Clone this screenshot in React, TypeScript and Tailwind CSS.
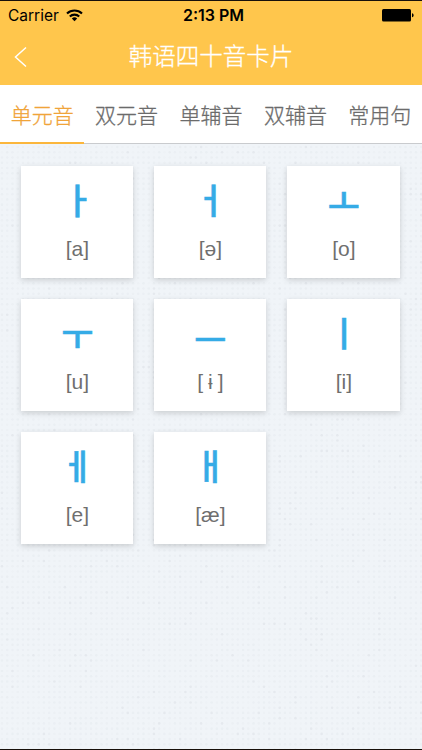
import { useState } from 'react'

interface Card {
  letter: string
  sound: string
  nudge?: string
}

const TABS = ['单元音', '双元音', '单辅音', '双辅音', '常用句']

// nudge: 字形在方格内的视觉位置微调
const CARDS: Card[] = [
  { letter: 'ㅏ', sound: 'a', nudge: 'pl-[2px]' },
  { letter: 'ㅓ', sound: 'ə' },
  { letter: 'ㅗ', sound: 'o', nudge: 'pt-[1px]' },
  { letter: 'ㅜ', sound: 'u', nudge: 'pt-[3px]' },
  { letter: 'ㅡ', sound: 'ɨ', nudge: 'pt-[6px]' },
  { letter: 'ㅣ', sound: 'i' },
  { letter: 'ㅔ', sound: 'e' },
  { letter: 'ㅐ', sound: 'æ' },
]

const STEP = 5.24

export default function App() {
  const [tab, setTab] = useState(0)

  return (
    <div className="flex h-[750px] w-[422px] flex-col overflow-hidden border-y border-[#17100a] bg-[#f0f4f8] font-['Liberation_Sans','Noto_Sans_CJK_SC',sans-serif]">
      <header className="h-[84px] shrink-0 bg-[#ffc64c]">
        <StatusBar />
        <div className="grid h-[54px] grid-cols-[48px_1fr_48px] items-center">
          <button className="pl-[14px] pt-px" aria-label="返回">
            <svg width="14" height="22" viewBox="0 0 14 22" fill="none" stroke="#fff" strokeWidth="1.5">
              <path d="M12 1.5 1.5 11 12 20.5" />
            </svg>
          </button>
          <h1 className="whitespace-nowrap text-center font-['Noto_Sans_CJK_SC',sans-serif] text-[23.5px] font-light leading-none text-white [-webkit-text-stroke:0.3px_#fff]">
            韩语四十音卡片
          </h1>
        </div>
      </header>

      <nav className="grid h-[59px] shrink-0 grid-cols-5 border-b border-[#c9cbce] bg-white">
        {TABS.map((name, i) => (
          <button
            key={name}
            onClick={() => setTab(i)}
            className={`-mb-px whitespace-nowrap border-b-2 pt-px font-['Noto_Sans_CJK_SC',sans-serif] text-[21px] font-light leading-none [-webkit-text-stroke:0.3px_currentColor] ${
              tab === i ? 'border-[#fbb63c] text-[#f0a43a]' : 'border-transparent text-[#6b6b6b]'
            }`}
          >
            {name}
          </button>
        ))}
      </nav>

      <main className="relative flex-1">
        <Dots />
        <div className="relative grid grid-cols-[112px_112px_113px] gap-[21px] pl-[21.4px] pt-[21.5px]">
          {CARDS.map(card => (
            <div key={card.letter} className="flex h-[112px] flex-col items-center bg-white shadow-[0_2px_6px_rgba(0,0,0,0.16)]">
              <span
                className={`mt-[15px] h-[36px] font-['Noto_Sans_CJK_KR',sans-serif] text-[35px] font-medium leading-[36px] text-[#35abe6] [-webkit-text-stroke:0.5px_#35abe6] ${card.nudge ?? ''}`}
              >
                {card.letter}
              </span>
              <span className="mt-[20px] whitespace-nowrap text-[21px] leading-[24px] text-[#6f6f6f]">
                [<span className={card.sound === 'ɨ' ? 'px-[5px]' : ''}>{card.sound}</span>]
              </span>
            </div>
          ))}
        </div>
      </main>
    </div>
  )
}

function StatusBar() {
  return (
    <div className="grid h-[28px] grid-cols-3 items-center px-[8px] font-['Inter',sans-serif] text-[16px] leading-none text-black">
      <div className="flex items-center gap-[7px]">
        <span className="pt-px text-[15.5px]">Carrier</span>
        <svg width="17" height="13" viewBox="0 0 17 13" fill="none" stroke="#000" strokeWidth="2.1">
          <path d="M1 4.6a10.8 10.8 0 0 1 15 0" />
          <path d="M3.8 7.5a6.8 6.8 0 0 1 9.4 0" />
          <path d="M8.5 12.3 5.8 9.6a4 4 0 0 1 5.4 0z" fill="#000" stroke="none" />
        </svg>
      </div>
      <span className="whitespace-nowrap pl-[5px] text-center font-semibold">2:13 PM</span>
      <svg className="justify-self-end" width="32" height="13" viewBox="0 0 32 13">
        <rect width="29" height="12.5" rx="1.5" />
        <path d="M30 4.2c2.2.5 2.2 3.6 0 4.1z" />
      </svg>
    </div>
  )
}

// 点阵背景，深浅随位置变化
function Dots() {
  const dots = []
  for (let row = 0; row < 116; row++) {
    for (let col = 0; col < 81; col++) {
      const n = Math.abs(Math.sin(row * 127.1 + col * 311.7) * 43758.5453) % 1
      dots.push(
        <circle
          key={`${row}-${col}`}
          cx={2 + col * STEP}
          cy={3 + row * STEP}
          r={1.3}
          fillOpacity={n > 0.95 ? 0.055 : 0.012 + (n % 0.3) * 0.06}
        />
      )
    }
  }
  return (
    <svg className="absolute inset-0 h-full w-full" fill="#303840">
      {dots}
    </svg>
  )
}
